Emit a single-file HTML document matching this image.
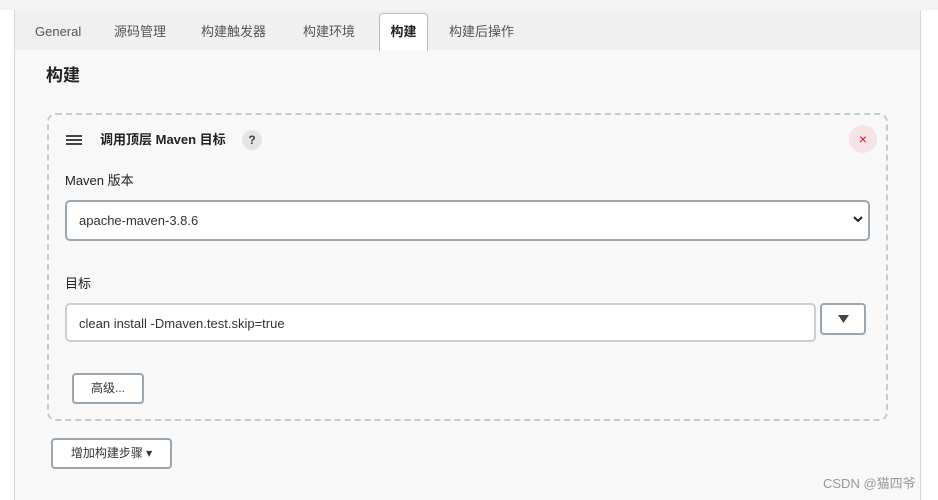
<!DOCTYPE html><html><head><meta charset="utf-8"><style>
*{box-sizing:border-box;margin:0;padding:0}
body{width:938px;height:497px;background:#fff;font-family:"Liberation Sans","Noto Sans CJK SC",sans-serif;color:#333;position:relative;overflow:hidden}
.page{position:absolute;left:14px;top:10px;width:907px;height:490px;background:#f8f8f8;border-left:1px solid #cfd8dc;border-right:1px solid #cfd8dc}
.top{position:absolute;left:0;top:0;width:938px;height:10px;background:#f3f3f3}
.tabs{position:absolute;left:15px;top:10px;width:905px;height:40px;background:#f0f0f0}
.tab{position:absolute;top:24px;font-size:13px;line-height:16px;height:16px;color:#555}
.act{position:absolute;left:379px;top:13px;width:49px;height:38px;background:#fff;border:1px solid #b0bec5;border-bottom:none;border-radius:4px 4px 0 0;font-size:13px;font-weight:bold;text-align:center;line-height:36px;color:#222}
.abs{position:absolute}
.card{position:absolute;left:47px;top:113px;width:841px;height:308px;border:2px dashed #c4ccd1;border-radius:9px}
.btn{position:absolute;background:#fff;border:2px solid #9aa7b1;border-radius:4px;font-size:12px;text-align:center;color:#333}
</style></head><body>
<div class="top"></div>
<div class="page"></div>
<div class="tabs"></div>
<div class="tab" style="left:35px">General</div>
<div class="tab" style="left:114px">源码管理</div>
<div class="tab" style="left:201px">构建触发器</div>
<div class="tab" style="left:303px">构建环境</div>
<div class="act">构建</div>
<div class="tab" style="left:449px">构建后操作</div>
<div class="abs" style="left:46px;top:61px;font-size:17px;font-weight:bold;color:#222">构建</div>
<div class="card"></div>
<div class="abs" style="left:66px;top:135px;width:16px;height:2px;background:#444;box-shadow:0 4px 0 #444,0 8px 0 #444"></div>
<div class="abs" style="left:100px;top:131px;font-size:13px;line-height:18px;font-weight:bold;color:#222">调用顶层 Maven 目标</div>
<div class="abs" style="left:242px;top:130px;width:20px;height:20px;border-radius:50%;background:#e4e4e4;font-size:12px;font-weight:bold;text-align:center;line-height:20px;color:#444">?</div>
<div class="abs" style="left:849px;top:125px;width:28px;height:28px;border-radius:50%;background:#f5e3e5;color:#e0102a;text-align:center;line-height:28px;font-size:14px">×</div>
<div class="abs" style="left:65px;top:170px;font-size:13px;color:#222">Maven 版本</div>
<div class="abs" style="left:65px;top:200px;width:805px;height:41px;background:#fff;border:2px solid #9aa7b1;border-radius:5px;font-size:13px;line-height:37px;padding-left:12px">apache-maven-3.8.6</div>
<svg class="abs" style="left:853px;top:216px" width="10" height="8"><path d="M1 1L5 5L9 1" stroke="#222" stroke-width="2" fill="none"/></svg>
<div class="abs" style="left:65px;top:273px;font-size:13px;color:#222">目标</div>
<div class="abs" style="left:65px;top:303px;width:751px;height:39px;background:#fff;border:2px solid #c8d0d5;border-radius:5px;font-size:13px;line-height:37px;padding-left:12px">clean install -Dmaven.test.skip=true</div>
<div class="btn" style="left:820px;top:303px;width:46px;height:32px"></div>
<svg class="abs" style="left:838px;top:315px" width="11" height="8"><path d="M0 0H11L5.5 8Z" fill="#444"/></svg>
<div class="btn" style="left:72px;top:373px;width:72px;height:31px;line-height:27px">高级...</div>
<div class="btn" style="left:51px;top:438px;width:121px;height:31px;line-height:27px">增加构建步骤 ▾</div>
<div class="abs" style="left:823px;top:473px;font-size:13px;color:#999">CSDN @猫四爷</div>
</body></html>
